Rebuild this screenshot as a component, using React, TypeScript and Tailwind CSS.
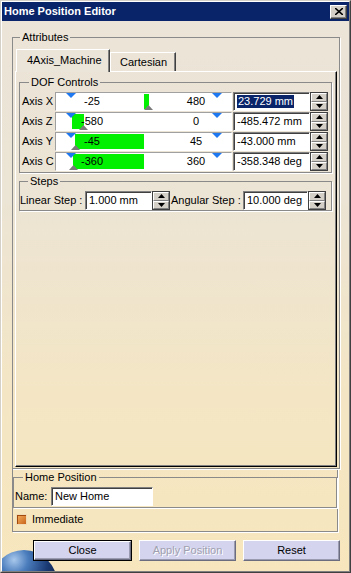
import React from "react";

type Axis = {
  name: string;
  min: string;
  max: string;
  from: number;
  to: number;
  mark: number;
  value: string;
  selected?: boolean;
};

const axes: Axis[] = [
  { name: "Axis X", min: "-25", max: "480", from: 88, to: 93, mark: 93, value: "23.729 mm", selected: true },
  { name: "Axis Z", min: "-580", max: "0", from: 16, to: 28, mark: 28, value: "-485.472 mm" },
  { name: "Axis Y", min: "-45", max: "45", from: 19, to: 88, mark: 20, value: "-43.000 mm" },
  { name: "Axis C", min: "-360", max: "360", from: 17, to: 88, mark: 18, value: "-358.348 deg" },
];

function Spin() {
  return (
    <div className="flex h-[19px] w-[18px] shrink-0 flex-col border border-[#404040] bg-[#d4d0c8]">
      <div className="flex flex-1 items-center justify-center border border-white border-r-[#808080] border-b-[#808080]">
        <svg width="7" height="4" viewBox="0 0 7 4">
          <path d="M3.5 0L7 4H0Z" fill="#000" />
        </svg>
      </div>
      <div className="flex flex-1 items-center justify-center border border-white border-r-[#808080] border-b-[#808080]">
        <svg width="7" height="4" viewBox="0 0 7 4">
          <path d="M0 0H7L3.5 4Z" fill="#000" />
        </svg>
      </div>
    </div>
  );
}

function Field({ value, width, selected }: { value: string; width: string; selected?: boolean }) {
  return (
    <div
      className={`flex h-[19px] shrink-0 items-center border border-[#808080] border-r-white border-b-white bg-white pl-[3px] shadow-[inset_1px_1px_0_#404040] ${width}`}
    >
      {selected ? (
        <span className="bg-[#0a246a] px-px text-white">{value}</span>
      ) : (
        <span>{value}</span>
      )}
    </div>
  );
}

function Slider({ axis }: { axis: Axis }) {
  return (
    <div className="relative h-[19px] w-[177px] shrink-0 border border-[#a0a0a0] border-r-white border-b-white bg-white">
      <div
        className="absolute top-[1px] bottom-[1px] bg-[#00f000]"
        style={{ left: axis.from, width: axis.to - axis.from }}
      />
      <svg className="absolute top-0 left-[10px]" width="10" height="5" viewBox="0 0 10 5">
        <path d="M0 0H10L5 5Z" fill="#1e78f0" />
      </svg>
      <svg className="absolute top-0 left-[156px]" width="10" height="5" viewBox="0 0 10 5">
        <path d="M0 0H10L5 5Z" fill="#1e78f0" />
      </svg>
      <svg
        className="absolute bottom-0"
        style={{ left: axis.mark - 5 }}
        width="9"
        height="5"
        viewBox="0 0 9 5"
      >
        <path d="M4.5 0L9 5H0Z" fill="#7a7a7a" />
      </svg>
      <div className="relative flex h-full items-center pl-[16px]">
        <span className="w-[40px] text-center">{axis.min}</span>
        <span className="ml-[64px] w-[40px] text-center">{axis.max}</span>
      </div>
    </div>
  );
}

function GroupBox({
  title,
  className,
  legendClass,
  children,
}: {
  title: string;
  className: string;
  legendClass: string;
  children: React.ReactNode;
}) {
  return (
    <fieldset className={`border border-[#8a8a8a] shadow-[1px_1px_0_#fff] ${className}`}>
      <legend className={`px-[2px] ${legendClass}`}>{title}</legend>
      {children}
    </fieldset>
  );
}

function Button({ label, isDefault, disabled }: { label: string; isDefault?: boolean; disabled?: boolean }) {
  return (
    <div className={isDefault ? "border border-black" : ""}>
      <div
        className={`flex items-center justify-center border border-white border-r-[#6c6c80] border-b-[#6c6c80] bg-[#d4d4ee] shadow-[inset_-1px_-1px_0_#9a9ab0] ${
          isDefault ? "h-[19px] w-[97px]" : "h-[21px] w-[97px]"
        }`}
      >
        <span className={disabled ? "text-[#a0a0b0] [text-shadow:1px_1px_0_#fff]" : ""}>{label}</span>
      </div>
    </div>
  );
}

function Globe() {
  return (
    <svg className="absolute bottom-0 left-0" width="60" height="44" viewBox="0 0 60 44">
      <defs>
        <radialGradient id="glow" cx="0.4" cy="0.85" r="0.6">
          <stop offset="0.5" stopColor="#f2b868" stopOpacity="1" />
          <stop offset="0.75" stopColor="#f5d9a0" stopOpacity="0.7" />
          <stop offset="1" stopColor="#f7e6bd" stopOpacity="0" />
        </radialGradient>
        <radialGradient id="earth" cx="0.35" cy="0.15" r="0.85">
          <stop offset="0" stopColor="#a8c8ec" />
          <stop offset="0.25" stopColor="#4a7cbc" />
          <stop offset="0.6" stopColor="#1a3a74" />
          <stop offset="1" stopColor="#0a1430" />
        </radialGradient>
      </defs>
      <circle cx="22" cy="56" r="42" fill="url(#glow)" />
      <circle cx="22" cy="56" r="33" fill="url(#earth)" />
    </svg>
  );
}

export default function App() {
  return (
    <div className="relative h-[573px] w-[351px] overflow-hidden border border-[#d4d0c8] border-r-[#404040] border-b-[#404040] font-['Liberation_Sans',Arial,sans-serif] text-[11px] leading-[13px] text-black">
      <div className="flex h-full flex-col border border-white border-r-[#808080] border-b-[#808080] bg-[linear-gradient(180deg,#ebe4d8_0%,#ece4d4_35%,#f4e6c4_70%,#f7e6bd_100%)]">
        {/* title bar */}
        <div className="flex h-[19px] shrink-0 items-center justify-between bg-[#0a246a] pr-[2px] pl-[2px]">
          <span className="text-[11px] font-bold text-white">Home Position Editor</span>
          <div className="flex h-[14px] w-[17px] items-center justify-center border border-white border-r-[#404040] border-b-[#404040] bg-[#d4d0c8] shadow-[inset_-1px_-1px_0_#808080]">
            <svg width="8" height="7" viewBox="0 0 8 7">
              <path d="M0 0L8 7M8 0L0 7" stroke="#000" strokeWidth="1.6" />
            </svg>
          </div>
        </div>

        <div className="relative flex flex-1 flex-col pt-[10px] pl-[10px]">
          <Globe />

          <GroupBox title="Attributes" className="relative w-[328px] px-[2px] pb-[1px]" legendClass="ml-[5px]">
            {/* tabs */}
            <div className="mt-[5px] flex items-end pl-px">
              <div className="relative z-10 -mb-px flex h-[23px] w-[94px] items-center border border-white border-r-[#404040] border-b-0 bg-[#ebe4d8] pb-px pl-[10px] shadow-[inset_-1px_0_0_#808080]">
                4Axis_Machine
              </div>
              <div className="flex h-[19px] w-[66px] items-center border border-white border-r-[#404040] border-b-0 pl-[9px] shadow-[inset_-1px_0_0_#808080]">
                Cartesian
              </div>
            </div>

            {/* tab panel */}
            <div className="h-[396px] border border-white border-r-black border-b-black pt-[4px] pr-[2px] pl-[3px] shadow-[inset_-1px_-1px_0_#808080]">
              <GroupBox title="DOF Controls" className="w-[313px] pt-[3px] pb-[1px] pl-[2px]" legendClass="ml-[7px]">
                <div className="flex flex-col gap-px">
                  {axes.map((axis) => (
                    <div key={axis.name} className="flex items-center">
                      <span className="w-[33px] shrink-0">{axis.name}</span>
                      <Slider axis={axis} />
                      <div className="ml-px flex">
                        <Field value={axis.value} width="w-[77px]" selected={axis.selected} />
                        <Spin />
                      </div>
                    </div>
                  ))}
                </div>
              </GroupBox>

              <GroupBox title="Steps" className="mt-[2px] w-[313px] pt-[3px]" legendClass="ml-[8px]">
                <div className="flex items-center">
                  <span className="w-[65px] shrink-0">Linear Step :</span>
                  <Field value="1.000 mm" width="w-[67px]" />
                  <Spin />
                  <span className="ml-px w-[72px] shrink-0">Angular Step :</span>
                  <Field value="10.000 deg" width="w-[65px]" />
                  <Spin />
                </div>
              </GroupBox>
            </div>
          </GroupBox>

          {/* home position frame */}
          <div className="w-[326px] border border-t-0 border-[#8a8a8a] pt-[2px] pb-[5px] shadow-[1px_1px_0_#fff]">
            <GroupBox title="Home Position" className="pb-px pl-px" legendClass="ml-[8px]">
              <div className="mt-[3px] flex items-center">
                <span className="w-[36px]">Name:</span>
                <Field value="New Home" width="w-[102px]" />
              </div>
            </GroupBox>
            <div className="mt-[5px] flex items-center pl-[3px]">
              <div className="h-[11px] w-[11px] border border-[#f0dcb8] bg-[linear-gradient(135deg,#f5b060,#c8641c)] shadow-[inset_1px_1px_0_#a04a10]" />
              <span className="ml-[5px]">Immediate</span>
            </div>
          </div>

          {/* buttons */}
          <div className="relative z-10 mt-[8px] ml-[21px] flex gap-[7px]">
            <Button label="Close" isDefault />
            <Button label="Apply Position" disabled />
            <Button label="Reset" />
          </div>
        </div>
      </div>
    </div>
  );
}
